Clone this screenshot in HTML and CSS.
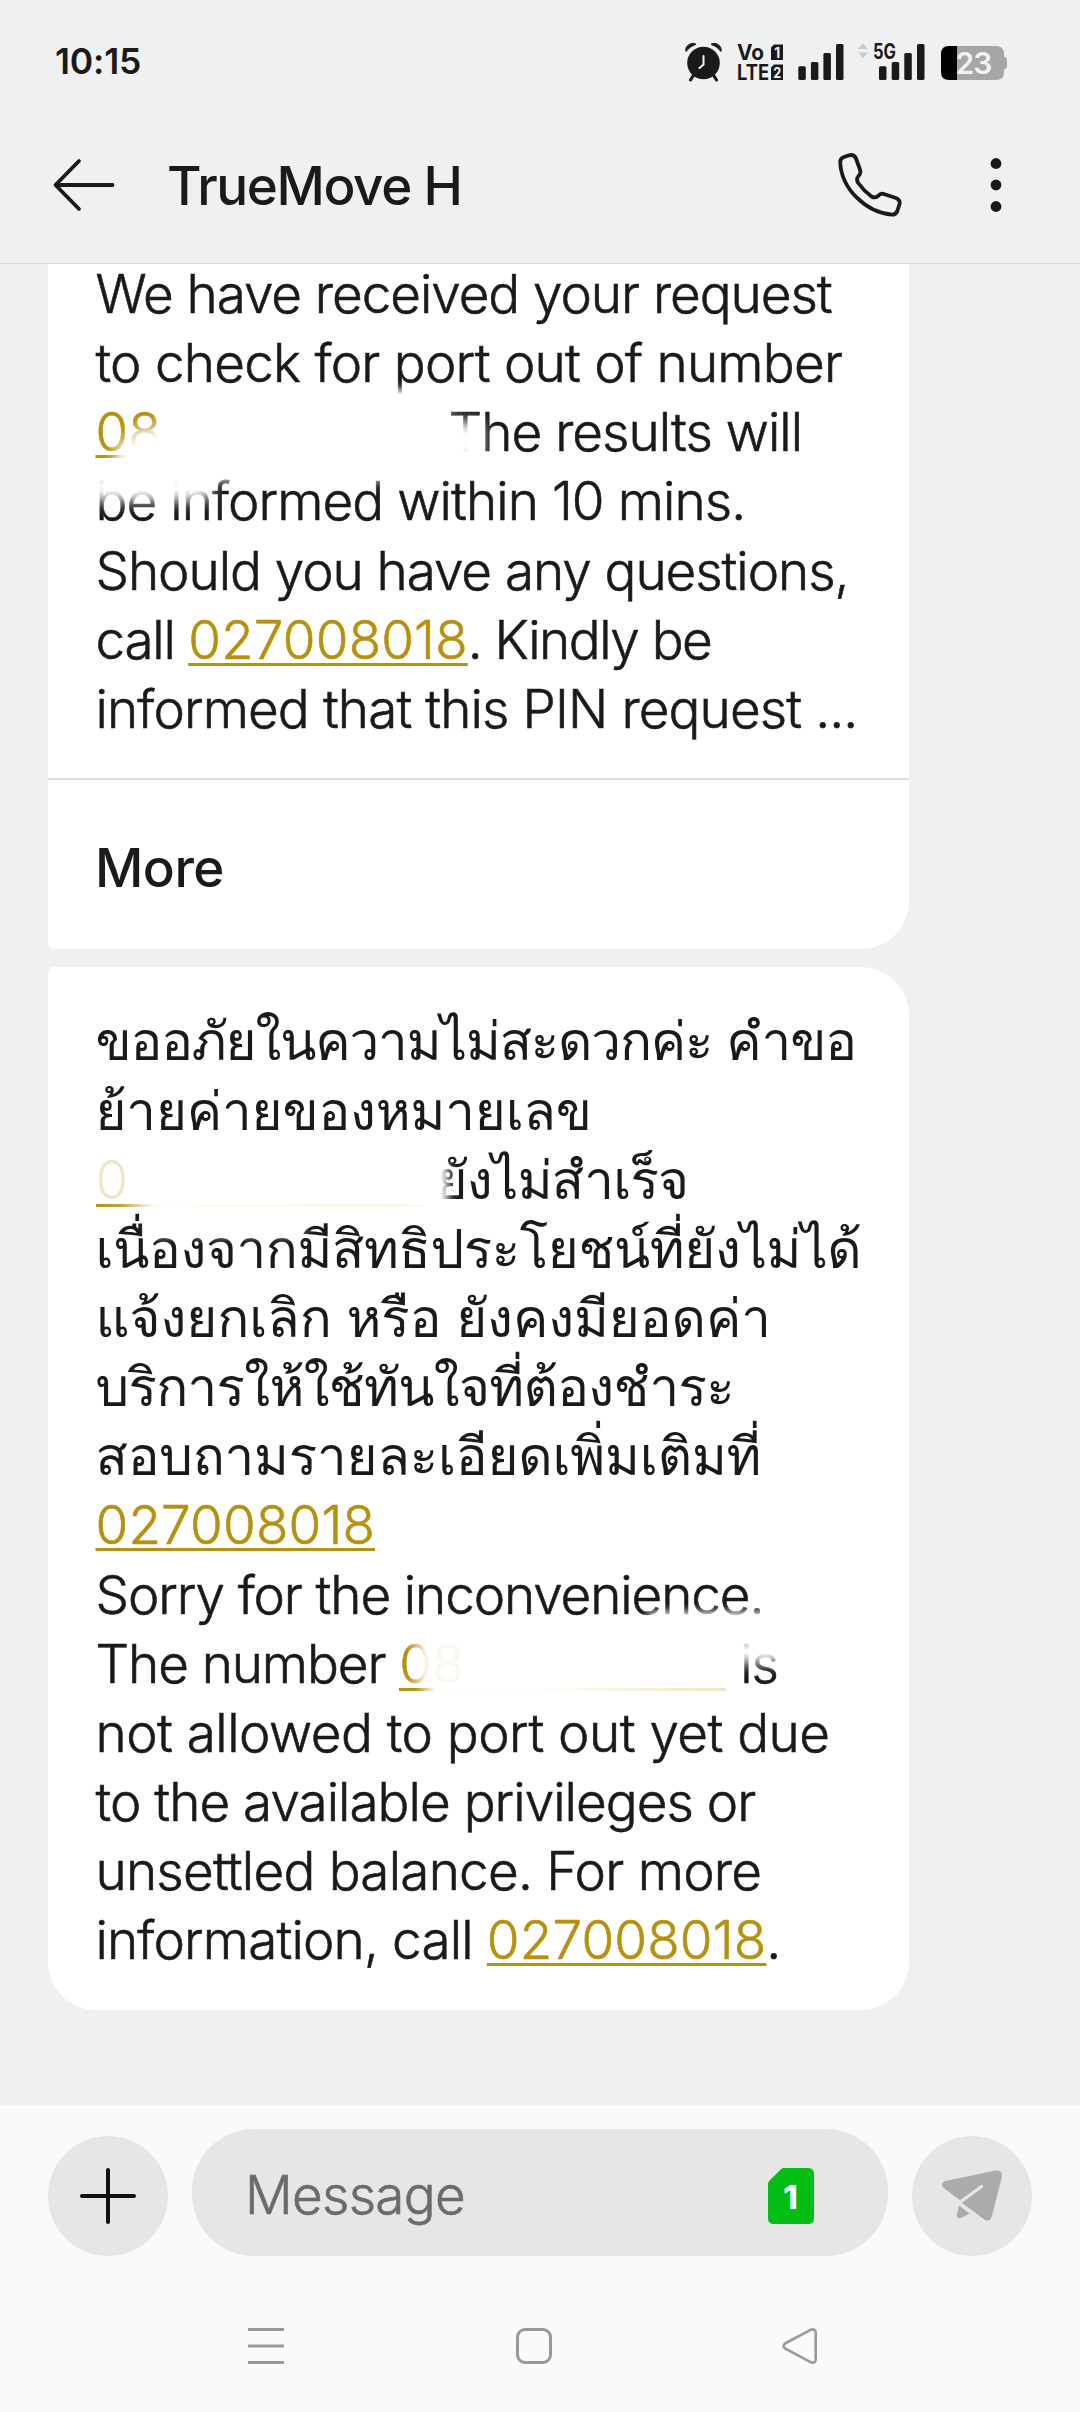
FILE: index.html
```
<!DOCTYPE html>
<html lang="en">
<head>
<meta charset="utf-8">
<title>TrueMove H</title>
<link rel="stylesheet" href="styles.css">
</head>
<body>
<div class="phone">
  <header class="top">
    <div class="status">
      <span class="clock">10:15</span>
      <svg class="status-icons" width="326" height="44" viewBox="684 40 326 44">
        <g fill="#1a1a1a">
          <circle cx="703.5" cy="63" r="16.3"/>
          <path d="M693 76l-2.500 4M714 76l2.500 4" stroke="#1a1a1a" stroke-width="3.200" stroke-linecap="round"/>
          <path d="M686 51.500C684.500 46 691 41.500 696 44.200Q689.500 46.500 686 51.500zM721 51.500C722.500 46 716 41.500 711 44.200Q717.500 46.500 721 51.500z" stroke="#1a1a1a" stroke-width="1"/>
          <path d="M703.500 56v8.500l-4 3.500" fill="none" stroke="#eff0f2" stroke-width="2" stroke-linecap="round"/>
          <text class="net" x="737" y="59.500" font-size="21" textLength="27" lengthAdjust="spacingAndGlyphs">Vo</text>
          <text class="net" x="737" y="79.700" font-size="21" textLength="32" lengthAdjust="spacingAndGlyphs">LTE</text>
          <path d="M774 44.500h9V60h-12V47.500zM774 64.500h9V80h-12V67.500z"/>
          <rect x="798.300" y="66.300" width="7.500" height="13.800" rx="1.500"/>
          <rect x="810.900" y="62" width="7.500" height="18" rx="1.500"/>
          <rect x="823.400" y="53" width="7.500" height="27" rx="1.500"/>
          <rect x="836" y="44" width="7.500" height="36" rx="1.500"/>
          <rect x="879" y="66.300" width="7.500" height="13.800" rx="1.500"/>
          <rect x="891.700" y="62" width="7.500" height="18" rx="1.500"/>
          <rect x="904.300" y="53" width="7.500" height="27" rx="1.500"/>
          <rect x="917" y="44" width="7.500" height="36" rx="1.500"/>
          <text class="net" x="873" y="59" font-size="21" textLength="23" lengthAdjust="spacingAndGlyphs">5G</text>
        </g>
        <g fill="#eff0f2">
          <text class="net" x="774.200" y="57.500" font-size="14" textLength="6" lengthAdjust="spacingAndGlyphs">1</text>
          <text class="net" x="773.200" y="77.500" font-size="14" textLength="8" lengthAdjust="spacingAndGlyphs">2</text>
        </g>
        <path d="M863 43.500l5 5.500h-10zM863 58l5-5.500h-10z" fill="#c9c9cb"/>
        <path d="M949 46h47q8 0 8 8v2.500q3 1 3 3v7q0 2-3 3V72q0 8-8 8h-47z" fill="#a6a6a6"/>
        <path d="M957 46v34h-8q-8 0-8-8V54q0-8 8-8z" fill="#000"/>
        <text class="charge" x="955.500" y="74.400">23</text>
      </svg>
    </div>
    <div class="bar">
      <svg class="back" width="64" height="54" viewBox="0 0 64 54" fill="none" stroke="#1a1a1a" stroke-width="3.800" stroke-linecap="round" stroke-linejoin="round">
        <path d="M60.500 27H4M27 3L3.500 27 27 51"/>
      </svg>
      <h1 class="title">TrueMove H</h1>
      <svg class="call" width="66" height="66" viewBox="0 0 66 66" fill="none" stroke="#1a1a1a" stroke-width="3.800" stroke-linejoin="round">
        <path d="M5.500 4.300L11 2.300Q16 1 18 5.500L22.300 17.500Q23 20.500 20.500 23Q17.800 26 20.200 30Q26 38 33.500 43.500Q37 45.500 40 43Q43 39.500 46.500 41.200L58 45Q62.500 47 61.500 51L59.500 57.500Q58 61.800 54 61.700C28 59.500 3.500 36 2.200 9.500Q2.200 5.500 5.500 4.300z"/>
      </svg>
      <svg class="dots" width="12" height="56" viewBox="0 0 12 56" fill="#1a1a1a">
        <circle cx="6" cy="6.500" r="5.400"/><circle cx="6" cy="28" r="5.400"/><circle cx="6" cy="49.500" r="5.400"/>
      </svg>
    </div>
  </header>

  <main class="thread">
    <article class="card first">
      <div class="text">
        <p class="t-107 lead">We have received your request</p>
        <p class="t-078">to check for port out of number</p>
        <p class="t-097"><span class="gap wide"><a class="num">08</a></span>The results will</p>
        <p class="t-092">be informed within 10 mins.</p>
        <p class="t-107">Should you have any questions,</p>
        <p class="t-124">call <a class="num">027008018</a><span class="t-149">. Kindly be</span></p>
        <p class="t-088">informed that this PIN request ...</p>
      </div>
      <div class="more">More</div>
      <i class="smudge s1"></i><i class="smudge s2"></i><i class="smudge s3"></i><i class="smudge s4"></i><i class="smudge s5"></i><i class="smudge s6"></i>
    </article>
    <article class="card second">
      <div class="text">
        <p class="thai h1">ขออภัยในความไม่สะดวกค่ะ คำขอ</p>
        <p class="thai h2">ย้ายค่ายของหมายเลข</p>
        <p class="thai h3"><span class="gap"><a class="masked pale">0</a></span>ยังไม่สำเร็จ</p>
        <p class="thai h4">เนื่องจากมีสิทธิประโยชน์ที่ยังไม่ได้</p>
        <p class="thai h5">แจ้งยกเลิก หรือ ยังคงมียอดค่า</p>
        <p class="thai h6">บริการให้ใช้ทันใจที่ต้องชำระ</p>
        <p class="thai h7">สอบถามรายละเอียดเพิ่มเติมที่</p>
        <p><a class="num">027008018</a></p>
        <p class="t-110">Sorry for the inconvenience.</p>
        <p class="t-110">The number <span class="gap"><a class="masked"><b>0</b>8</a></span>is</p>
        <p class="t-050">not allowed to port out yet due</p>
        <p class="t-100">to the available privileges or</p>
        <p class="t-078">unsettled balance. For more</p>
        <p class="t-084">information, call <a class="num">027008018</a>.</p>
      </div>
      <i class="smudge s7"></i><i class="smudge s8"></i><i class="smudge s9"></i><i class="smudge s10"></i>
    </article>
  </main>

  <footer class="bottom">
    <div class="composer">
      <div class="round">
        <svg width="58" height="58" viewBox="0 0 58 58" stroke="#111" stroke-width="4" stroke-linecap="round"><path d="M3 29h52M29 3v52"/></svg>
      </div>
      <div class="field">
        <span class="hint">Message</span>
        <svg class="sim" width="46" height="56" viewBox="0 0 46 56">
          <path d="M16 0h24q6 0 6 6v44q0 6-6 6H6q-6 0-6-6V16q0-2 1.500-3.500L13 1.200Q14.200 0 16 0z" fill="#00be13"/>
          <text class="sim-num" x="22.500" y="40.500">1</text>
        </svg>
      </div>
      <div class="round">
        <svg width="62" height="54" viewBox="0 0 62 54">
          <path d="M4.500 12L54.500 1.500Q61.500 0.500 61 7.500L50.500 48.500Q48.500 53 44 51L21 34 19.500 31.500 2 18.500Q-1 14.500 4.500 12z" fill="#ababab"/>
          <path d="M18 36.500L28.500 44.500 20 49Q16 50 15.800 46z" fill="#ababab"/>
          <path d="M18.500 33.500L40.500 17.500" stroke="#e6e6e6" stroke-width="3.200" stroke-linecap="round"/>
        </svg>
      </div>
    </div>
    <nav class="nav">
      <svg width="36" height="38" viewBox="0 0 36 38" stroke="#999" stroke-width="3"><path d="M0 2.500h36M0 19h36M0 35.500h36"/></svg>
      <svg class="home" width="36" height="38" viewBox="0 0 36 38" fill="none" stroke="#999" stroke-width="3"><rect x="1.500" y="2.500" width="33" height="33" rx="7.500"/></svg>
      <svg class="tri" width="36" height="38" viewBox="0 0 36 38" fill="none" stroke="#999" stroke-width="2.600"><path d="M3 16.500L29 2.700Q33.500 1.500 33.700 5.500V32.500Q33.500 36.500 29 35.300L3 21.500Q.200 19 3 16.500z"/></svg>
    </nav>
  </footer>
</div>
</body>
</html>
```
FILE: styles.css
```
* { box-sizing: border-box; margin: 0; padding: 0; }

body { background: #eff0f2; font-family: Inter, Loma, "Noto Sans", sans-serif; color: #1a1a1a; }

.phone { width: 1080px; height: 2412px; display: flex; flex-direction: column; overflow: hidden; }

/* Header */
.top { height: 264px; flex: none; border-bottom: 1px solid #d7d8da; background: #eff0f2; }
.status { height: 104px; padding: 40px 70px 0 55px; display: flex; justify-content: space-between; align-items: flex-start; }
.clock { font-size: 35.500px; font-weight: 600; line-height: 44px; letter-spacing: -0.200px; }
.status-icons { display: block; }
.net { font-family: Inter, sans-serif; font-weight: 700; }
.charge { font: 600 30px Inter, sans-serif; fill: #f2f2f3; letter-spacing: -1px; }
.bar { height: 160px; padding: 0 78px 0 52px; display: flex; align-items: center; }
.back { margin-top: 2px; }
.title { margin: 5px auto 0 51px; font-size: 53px; font-weight: 500; line-height: 69px; letter-spacing: -1.400px; }
.call { margin: 3px 86px 0 0; }
.dots { margin-top: 2px; }

/* Conversation */
.thread { flex: 1; padding: 0 171px 0 48px; overflow: hidden; display: flex; flex-direction: column; gap: 18px; }
.card { position: relative; background: #fff; flex: none; overflow: hidden; }
.first { border-radius: 0 0 48px 6px; }
.second { padding: 40px 0 35px; border-radius: 6px 48px 48px 48px; }
.text { padding: 0 0 0 47.500px; font-size: 53px; font-weight: 300; line-height: 69.150px; -webkit-text-stroke: 0.600px; }
.text p { height: 69.150px; white-space: nowrap; }
.text .lead { height: 65.150px; line-height: 61.150px; }
.first .text { padding-bottom: 34.500px; }
.more { height: 171px; padding: 4px 47px 0; border-top: 2px solid #dedede; font-size: 53px; font-weight: 500; line-height: 168px; letter-spacing: -0.500px; }
.num { color: #b8900f; letter-spacing: 0.170px; text-decoration: underline; text-decoration-thickness: 3px; text-underline-offset: 4px; text-decoration-skip-ink: none; }

.t-050 { letter-spacing: -0.520px; }
.t-078 { letter-spacing: -0.760px; }
.t-084 { letter-spacing: -0.840px; }
.t-088 { letter-spacing: -0.880px; }
.t-092 { letter-spacing: -0.920px; }
.t-097 { letter-spacing: -0.970px; }
.t-100 { letter-spacing: -0.960px; }
.t-107 { letter-spacing: -1.040px; }
.t-110 { letter-spacing: -1.100px; }
.t-124 { letter-spacing: -1.240px; }
.t-149 { letter-spacing: -1.490px; }

.thai { font-weight: 400; -webkit-text-stroke: 0; }
.h1 { letter-spacing: -1.180px; }
.h2 { letter-spacing: -0.200px; }
.h3 { letter-spacing: -0.800px; }
.h4 { letter-spacing: -0.420px; }
.h5 { letter-spacing: -0.100px; }
.h6 { letter-spacing: -0.720px; }
.h7 { letter-spacing: -0.220px; }

/* Hidden phone numbers */
.gap { display: inline-block; width: 341px; }
.gap.wide { width: 353px; }
.masked { display: inline-block; width: 327px; height: 69px; font-weight: 300; letter-spacing: 0; color: #fcf8f0; background: linear-gradient(90deg, #b8900f 5%, #fffefa 11%, #fffdf6 45%, #efe5c4 100%) 0 58px / 100% 3px no-repeat; vertical-align: top; }
.masked b { font-weight: 300; color: transparent; background: linear-gradient(90deg, #b8900f 25%, #faf4e4 80%); -webkit-background-clip: text; background-clip: text; }
.masked.pale { color: #efe5c9; background-image: linear-gradient(90deg, #b8900f 0, #c4a33c 8%, #eadfb9 14%, #fffdf6 18%, #faf5e3 100%); }
.smudge { position: absolute; background: #fff; filter: blur(7px); }
.s1 { left: 82px; top: 165px; width: 300px; height: 46px; }
.s2 { left: 114px; top: 134px; width: 280px; height: 80px; }
.s3 { left: 40px; top: 208px; width: 122px; height: 29px; }
.s4 { left: 300px; top: 126px; width: 110px; height: 18px; filter: blur(5px); }
.s5 { left: 68px; top: 178px; width: 60px; height: 30px; }
.s6 { left: 392px; top: 158px; width: 42px; height: 38px; }
.s7 { left: 360px; top: 196px; width: 40px; height: 44px; filter: blur(5px); }
.s8 { left: 100px; top: 248px; width: 155px; height: 20px; filter: blur(5px); }
.s9 { left: 600px; top: 645px; width: 140px; height: 22px; filter: blur(5px); }
.s10 { left: 684px; top: 672px; width: 50px; height: 24px; }

/* Composer and navigation */
.bottom { flex: none; height: 307px; background: #fafafa; }
.composer { padding: 24px 48px 0; display: flex; align-items: flex-end; gap: 24px; }
.round { width: 120px; height: 120px; border-radius: 50%; background: #e6e6e6; display: grid; place-items: center; }
.field { flex: 1; height: 127px; border-radius: 62px; background: #e6e6e6; display: flex; align-items: center; justify-content: space-between; padding: 7px 74px 0 53px; }
.hint { margin-top: -2px; font-size: 53px; font-weight: 300; -webkit-text-stroke: 0.600px; letter-spacing: -0.700px; color: #6b6b6b; }
.sim { display: block; }
.sim-num { font: 800 33px Inter, sans-serif; fill: #fff; text-anchor: middle; }
.nav { padding: 71px 262px 0 248px; display: flex; justify-content: space-between; }
.home { margin-left: 2px; }
```
